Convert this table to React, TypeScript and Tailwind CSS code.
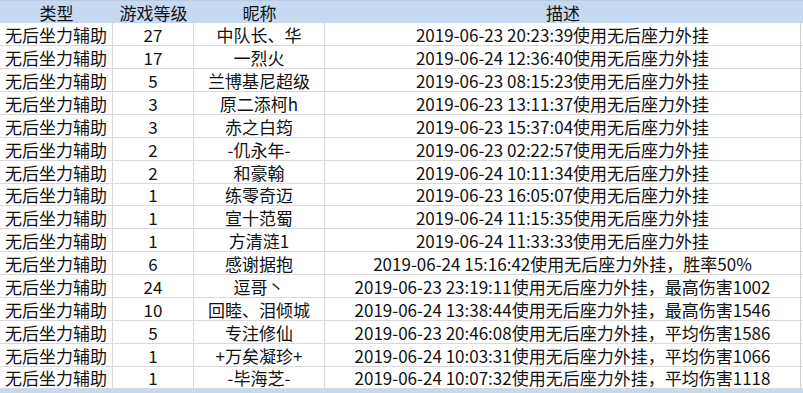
import React from "react";

const rows: [string, string, string, string][] = [
  ["无后坐力辅助", "27", "中队长、华", "2019-06-23 20:23:39使用无后座力外挂"],
  ["无后坐力辅助", "17", "一烈火", "2019-06-24 12:36:40使用无后座力外挂"],
  ["无后坐力辅助", "5", "兰博基尼超级", "2019-06-23 08:15:23使用无后座力外挂"],
  ["无后坐力辅助", "3", "原二添柯h", "2019-06-23 13:11:37使用无后座力外挂"],
  ["无后坐力辅助", "3", "赤之白筠", "2019-06-23 15:37:04使用无后座力外挂"],
  ["无后坐力辅助", "2", "-仉永年-", "2019-06-23 02:22:57使用无后座力外挂"],
  ["无后坐力辅助", "2", "和豪翰", "2019-06-24 10:11:34使用无后座力外挂"],
  ["无后坐力辅助", "1", "练零奇迈", "2019-06-23 16:05:07使用无后座力外挂"],
  ["无后坐力辅助", "1", "宣十范蜀", "2019-06-24 11:15:35使用无后座力外挂"],
  ["无后坐力辅助", "1", "方清涟1", "2019-06-24 11:33:33使用无后座力外挂"],
  ["无后坐力辅助", "6", "感谢据抱", "2019-06-24 15:16:42使用无后座力外挂，胜率50%"],
  ["无后坐力辅助", "24", "逗哥丶", "2019-06-23 23:19:11使用无后座力外挂，最高伤害1002"],
  ["无后坐力辅助", "10", "回睦、泪倾城", "2019-06-24 13:38:44使用无后座力外挂，最高伤害1546"],
  ["无后坐力辅助", "5", "专注修仙", "2019-06-23 20:46:08使用无后座力外挂，平均伤害1586"],
  ["无后坐力辅助", "1", "+万矣凝珍+", "2019-06-24 10:03:31使用无后座力外挂，平均伤害1066"],
  ["无后坐力辅助", "1", "-毕海芝-", "2019-06-24 10:07:32使用无后座力外挂，平均伤害1118"],
];

export default function App() {
  return (
    <div
      className="w-[803px] h-[393px] bg-white overflow-hidden text-[#111] text-[17px] leading-none"
      style={{ fontFamily: '"Microsoft YaHei", "Noto Sans CJK SC", "Noto Sans", sans-serif' }}
    >
      <div className="grid grid-cols-[113px_81px_131px_476px_2px] h-[23px] bg-[#c5d9f1] border-t border-[#b7cbe4]">
        <div className="flex items-center justify-center">类型</div>
        <div className="flex items-center justify-center">游戏等级</div>
        <div className="flex items-center justify-center">昵称</div>
        <div className="flex items-center justify-center">描述</div>
        <div />
      </div>
      {rows.map((r, i) => (
        <div
          key={i}
          className={`grid grid-cols-[113px_81px_131px_476px_2px] ${
            i === 7 || i === 15 ? "h-[22px]" : "h-[23px]"
          } border-b border-[#d9d9d9]`}
        >
          <div className="flex items-center justify-center border-r border-[#d9d9d9]">{r[0]}</div>
          <div className="flex items-center justify-center border-r border-[#d9d9d9]">{r[1]}</div>
          <div className="flex items-center justify-center border-r border-[#d9d9d9]">{r[2]}</div>
          <div className="flex items-center justify-center border-r border-[#cfcfcf]">{r[3]}</div>
          <div />
        </div>
      ))}
      <div className="h-[12px] bg-[#c5d9f1]" />
    </div>
  );
}
